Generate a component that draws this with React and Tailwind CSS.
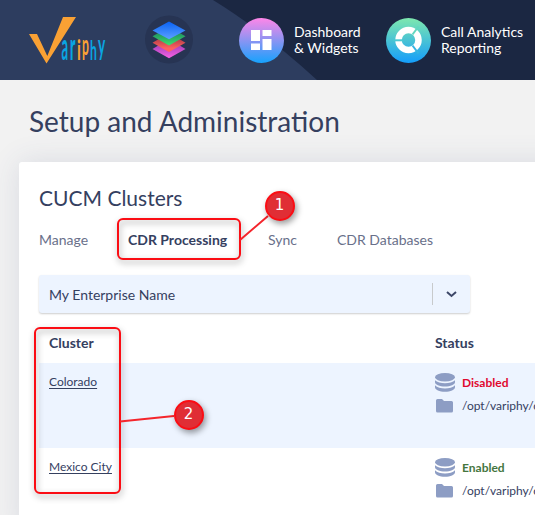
import React from 'react';

const wordmark = [
    { char: 'a', x: 61.6, y: 60, sx: 0.34, sy: 1.02, color: '#0aa5e2' },
    { char: 'r', x: 69.8, y: 60, sx: 0.4, sy: 1.02, color: '#0aa5e2' },
    { char: 'i', x: 77, y: 60, sx: 0.4, sy: 0.73, color: '#f9a134' },
    { char: 'p', x: 82, y: 54.7, sx: 0.32, sy: 0.75, color: '#f9a134' },
    { char: 'h', x: 90, y: 60, sx: 0.32, sy: 0.71, color: '#0aa5e2' },
    { char: 'y', x: 98, y: 54.7, sx: 0.36, sy: 0.75, color: '#0aa5e2' },
];

const clusters = [
    { name: 'Colorado', status: 'Disabled', path: '/opt/variphy/cdr' },
    { name: 'Mexico City', status: 'Enabled', path: '/opt/variphy/cdr' },
];

const Logo = () => (
    <svg width="145" height="80" viewBox="0 0 145 80" className="shrink-0">
        <path d="M29 34H37L47.300 56L63 17H76L46.500 63.500Z" fill="#f9a134" />
        {wordmark.map((l) => (
            <text
                key={l.char}
                transform={`translate(${l.x} ${l.y}) scale(${l.sx} ${l.sy})`}
                fontFamily="Lato, sans-serif"
                fontSize="38"
                fontWeight="700"
                fill={l.color}
            >
                {l.char}
            </text>
        ))}
    </svg>
);

const LayersIcon = () => (
    <svg width="48" height="49" viewBox="0 0 48 49" className="shrink-0">
        <defs>
            <linearGradient id="layerBlue" x1="0" y1="0" x2="0" y2="1">
                <stop offset="0" stopColor="#0a62f5" />
                <stop offset="1" stopColor="#5ba0ff" />
            </linearGradient>
            <linearGradient id="layerGreen" x1="0" y1="0" x2="0" y2="1">
                <stop offset="0.4" stopColor="#239a62" />
                <stop offset="1" stopColor="#3ee06f" />
            </linearGradient>
            <linearGradient id="layerRed" x1="0" y1="0" x2="0" y2="1">
                <stop offset="0.4" stopColor="#c2454c" />
                <stop offset="0.8" stopColor="#ff6060" />
            </linearGradient>
            <linearGradient id="layerPink" x1="0" y1="0" x2="0" y2="1">
                <stop offset="0.4" stopColor="#b045c0" />
                <stop offset="1" stopColor="#fa62e6" />
            </linearGradient>
        </defs>
        <circle cx="24" cy="24.500" r="24" fill="#273453" />
        <path d="M24 24L40.500 34L24 43.300L7.500 34Z" fill="url(#layerPink)" />
        <path d="M24 18L40.500 27.700L24 37L7.500 27.700Z" fill="url(#layerRed)" />
        <path d="M24 12L40.500 21.300L24 30.500L7.500 21.300Z" fill="url(#layerGreen)" />
        <path d="M24 6.500L40.500 15.500L24 24.300L7.500 15.500Z" fill="url(#layerBlue)" />
    </svg>
);

const DashboardIcon = () => (
    <svg width="45" height="45" viewBox="0 0 45 45" className="shrink-0">
        <defs>
            <linearGradient id="dashFill" x1="0" y1="0" x2="0" y2="1">
                <stop offset="0" stopColor="#ff86e8" />
                <stop offset="1" stopColor="#16a2fd" />
            </linearGradient>
        </defs>
        <circle cx="22.500" cy="22.500" r="22.500" fill="url(#dashFill)" />
        <path d="M12 12h9v11h-9zM23.500 12h9v6h-9zM12 25.500h9v6.500h-9zM23.500 21h9v11h-9z" fill="#fff" />
    </svg>
);

const AnalyticsIcon = () => (
    <svg width="45" height="45" viewBox="0 0 45 45" className="shrink-0">
        <defs>
            <linearGradient id="callFill" x1="0" y1="0" x2="0" y2="1">
                <stop offset="0" stopColor="#7ee8ae" />
                <stop offset="1" stopColor="#149dfb" />
            </linearGradient>
        </defs>
        <circle cx="22.500" cy="22.500" r="22.500" fill="url(#callFill)" />
        <circle cx="22.500" cy="22" r="10" fill="none" stroke="#fff" strokeWidth="6.500" />
        <path d="M26.500 16.500L32.500 8.500" stroke="#62d7bf" strokeWidth="2" />
        <path d="M26.500 27.500L32.500 35.500" stroke="#36b5e2" strokeWidth="2" />
        <path d="M7 22.300H17" stroke="#4bc8d2" strokeWidth="2" />
    </svg>
);

const DatabaseIcon = () => (
    <svg width="20" height="19" viewBox="0 0 20 19" fill="#8d9dc4">
        <ellipse cx="10" cy="4.300" rx="10" ry="4.200" />
        <path d="M0 7.200C2 9.300 6 10.200 10 10.200S18 9.300 20 7.200V9.200C20 11.500 15.500 13.500 10 13.500S0 11.500 0 9.200Z" />
        <path d="M0 12.200C2 14.500 6 15.400 10 15.400S18 14.500 20 12.200V14.200C20 16.800 15.500 18.700 10 18.700S0 16.800 0 14.200Z" />
    </svg>
);

const FolderIcon = () => (
    <svg width="17" height="14" viewBox="0 0 17 14" fill="#8d9dc4">
        <path d="M1.500 0H6L8 2H15.500Q17 2 17 3.500V12Q17 13.500 15.500 13.500H1.500Q0 13.500 0 12V1.500Q0 0 1.500 0Z" />
    </svg>
);

const Badge = ({ children, className }) => (
    <div className={`absolute flex size-[30px] items-center justify-center rounded-full border-2 border-[#fb0d14] bg-[#e02e35] font-['DejaVu_Sans',sans-serif] text-[15px] text-white shadow-[2px_3px_6px_rgba(0,0,0,0.4)] ${className}`}>
        {children}
    </div>
);

const Callouts = () => (
    <div className="pointer-events-none absolute inset-0">
        <div className="absolute top-[218px] left-[116.5px] h-[42px] w-[124px] rounded-[6px] border-2 border-[#fb0d14] drop-shadow-[1px_3px_3px_rgba(0,0,0,0.4)]" />
        <div className="absolute top-[327px] left-[33.5px] h-[167px] w-[87px] rounded-[6px] border-2 border-[#fb0d14] drop-shadow-[1px_3px_3px_rgba(0,0,0,0.4)]" />
        <svg width="535" height="515" className="absolute inset-0" stroke="#f4252c" strokeWidth="2">
            <path d="M240 240L268 216M120 421.500L174 416" />
        </svg>
        <Badge className="top-[190.5px] left-[264.5px]">1</Badge>
        <Badge className="top-[399.5px] left-[173.5px]">2</Badge>
    </div>
);

const App = () => {
    return (
        <div className="relative flex h-[515px] w-[535px] flex-col overflow-hidden bg-[#f2f2f2] font-[Lato,sans-serif] text-[#35405f]">
            <header className="relative h-20 shrink-0 bg-[#2d3d5f]">
                <svg width="535" height="80" className="absolute inset-0">
                    <path d="M213 0Q262 30 317 80H535V0Z" fill="#1b2742" />
                </svg>
                <div className="relative flex h-20 text-[14px] leading-4 text-white">
                    <Logo />
                    <div className="pt-[15px]">
                        <LayersIcon />
                    </div>
                    <div className="ml-[46px] flex w-[147px] gap-[10px] pt-[18px]">
                        <DashboardIcon />
                        <span className="pt-[6px] whitespace-nowrap">Dashboard<br />&amp; Widgets</span>
                    </div>
                    <div className="flex gap-[10px] pt-[18px]">
                        <AnalyticsIcon />
                        <span className="pt-[6px] whitespace-nowrap">Call Analytics<br />Reporting</span>
                    </div>
                </div>
            </header>

            <h1 className="h-[82px] shrink-0 pt-[23px] pl-[29px] text-[28px] leading-9">Setup and Administration</h1>

            <main className="ml-[19px] w-[600px] grow rounded-tl-[3px] bg-white pt-[23px] shadow-[0_0_30px_rgba(55,70,120,0.13)]">
                <h2 className="pl-5 text-[21px] leading-[26px]">CUCM Clusters</h2>
                <nav className="flex pt-[19px] pl-5 text-[14px] leading-5 text-[#69708a]">
                    <span className="w-[89px]">Manage</span>
                    <span className="w-[140px] font-bold text-[#35405f]">CDR Processing</span>
                    <span className="w-[69px]">Sync</span>
                    <span>CDR Databases</span>
                </nav>

                <div className="mt-[25px] ml-5 flex h-[38px] w-[431px] items-center rounded-[3px] bg-[#edf4ff] pl-[10px] text-[14px] shadow-[0_1px_2px_rgba(0,0,0,0.2)]">
                    <span className="grow">My Enterprise Name</span>
                    <span className="h-[22px] w-px bg-[#c8cacc]" />
                    <svg width="37" height="38" viewBox="0 0 37 38" fill="none" stroke="#3d4768" strokeWidth="2">
                        <path d="M14 17L18.500 21L23 17" />
                    </svg>
                </div>

                <div className="ml-5">
                    <div className="flex h-[50px] items-center pt-[8px] pl-[10px] text-[14px] font-bold">
                        <span className="w-[386px]">Cluster</span>
                        <span>Status</span>
                    </div>
                    {clusters.map((c) => (
                        <div key={c.name} className="flex h-[85px] pl-[10px] text-[12px] leading-4 odd:bg-white even:bg-[#edf4ff]">
                            <div className="w-[386px] pt-[11px]">
                                <span className="underline underline-offset-2">{c.name}</span>
                            </div>
                            <div className="flex flex-col gap-[6px] pt-[10px]">
                                <div className="flex h-[19px] items-center gap-[7px]">
                                    <DatabaseIcon />
                                    <span className={c.status === 'Enabled' ? 'font-bold text-[#45763f]' : 'font-bold text-[#e0082f]'}>{c.status}</span>
                                </div>
                                <div className="flex h-4 items-center gap-[9px] pl-px">
                                    <FolderIcon />
                                    <span>{c.path}</span>
                                </div>
                            </div>
                        </div>
                    ))}
                </div>
            </main>

            <Callouts />
        </div>
    );
};

export default App;
